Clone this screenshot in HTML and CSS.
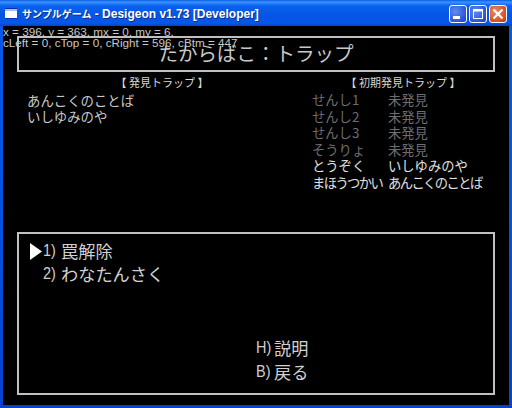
FILE: index.html
```html
<!DOCTYPE html>
<html lang="ja">
<head>
<meta charset="utf-8">
<title>サンプルゲーム</title>
<link rel="stylesheet" href="styles.css">
</head>
<body>
<div class="window">
  <div class="titlebar">
    <svg class="appicon" width="12" height="11" viewBox="0 0 12 11"><rect width="12" height="11" fill="#0a2fb0"/><rect x="0" y="1" width="12" height="9" fill="#fff"/><rect x="0" y="1" width="12" height="2" fill="#a8c0ee"/></svg>
    <span class="titletext"><span class="titlejp">サンプルゲーム</span> - Desigeon v1.73 [Developer]</span>
    <div class="buttons">
      <div class="wbtn blue"><svg width="16" height="16" viewBox="0 0 16 16"><rect x="3" y="10" width="7" height="3" fill="#fff"/></svg></div>
      <div class="wbtn blue"><svg width="16" height="16" viewBox="0 0 16 16"><rect x="3.5" y="3.5" width="9" height="9" fill="none" stroke="#fff"/><rect x="3" y="3" width="10" height="2.5" fill="#fff"/></svg></div>
      <div class="wbtn red"><svg width="16" height="16" viewBox="0 0 16 16"><path d="M3.5 3.5l9 9M12.5 3.5l-9 9" stroke="#fff" stroke-width="2.2" fill="none"/></svg></div>
    </div>
  </div>
  <div class="client">
    <div class="debug">x = 396, y = 363, mx = 0, my = 6,<br>cLeft = 0, cTop = 0, cRight = 596, cBtm = 447</div>
    <div class="framebox heading">たからばこ：トラップ</div>
    <div class="lists">
      <section class="found">
        <h2 class="listhead">【 発見トラップ 】</h2>
        <div class="rows">
          <div>あんこくのことば</div>
          <div>いしゆみのや</div>
        </div>
      </section>
      <section class="initial">
        <h2 class="listhead">【 初期発見トラップ 】</h2>
        <div class="table">
          <span class="dim">せんし1</span><span class="dim">未発見</span>
          <span class="dim">せんし2</span><span class="dim">未発見</span>
          <span class="dim">せんし3</span><span class="dim">未発見</span>
          <span class="dim">そうりょ</span><span class="dim">未発見</span>
          <span>とうぞく</span><span>いしゆみのや</span>
          <span class="tight">まほうつかい</span><span class="tight">あんこくのことば</span>
        </div>
      </section>
    </div>
    <div class="framebox menu">
      <div class="menuitem"><svg class="cursor" width="12" height="17" viewBox="0 0 12 17"><path d="M0 0L12 8.5L0 17Z" fill="#fff"/></svg><span class="key">1)</span>罠解除</div>
      <div class="menuitem"><span class="key">2)</span>わなたんさく</div>
      <div class="bottommenu">
        <div class="menuitem"><span class="key">H)</span>説明</div>
        <div class="menuitem"><span class="key">B)</span>戻る</div>
      </div>
    </div>
  </div>
</div>
</body>
</html>
```
FILE: styles.css
```css
* { box-sizing: border-box; }
html, body { margin: 0; padding: 0; background: #000; }
.window {
  width: 512px; height: 408px; display: flex; flex-direction: column;
  background: linear-gradient(180deg, #0a58e8 0%, #0553e2 50%, #0443cf 100%);
  font-family: "Noto Sans CJK JP", "DejaVu Sans", sans-serif;
  overflow: hidden;
}
.titlebar {
  height: 26px; display: flex; align-items: center; padding: 1px 5px 0 5px; flex: none;
  background: linear-gradient(180deg, #0a5be0 0%, #3a93ff 8%, #0a62ee 22%, #0554e4 60%, #0658ea 88%, #0444c8 100%);
}
.appicon { flex: none; margin-right: 5px; }
.titletext {
  color: #fff; font: bold 12px "Liberation Sans", "Noto Sans CJK JP", sans-serif; white-space: nowrap;
  text-shadow: 1px 1px 0 #0a2f90; flex: 1;
}
.titlejp { font-family: "Noto Sans CJK JP", sans-serif; font-size: 10px; }
.buttons { display: flex; gap: 2px; }
.wbtn { width: 18px; height: 18px; border: 1px solid #fff; border-radius: 3px; overflow: hidden; }
.wbtn svg { display: block; }
.blue { background: radial-gradient(circle at 35% 35%, #5f8cf0, #2a50d8 75%, #2040b8); }
.red { background: radial-gradient(circle at 35% 35%, #e88a6a, #d64a22 75%, #b03010); }
.client {
  position: relative; flex: 1; margin: 0 3px 3px 3px; background: #000; color: #c8c8c8;
  padding: 10px 14px 10px 14px; display: flex; flex-direction: column;
}
.debug {
  position: absolute; left: 0; top: 0; z-index: 2;
  font: 11.7px/11px "Liberation Sans", sans-serif; color: #c8c8c8; white-space: nowrap;
}
.framebox { border: 2px solid #c0c0c0; }
.heading { height: 36px; text-align: center; font-size: 19.5px; line-height: 30px; color: #c8c8c8; flex: none; }
.lists { height: 160px; display: flex; flex: none; }
.listhead { margin: 0; font-size: 11px; font-weight: normal; line-height: 18px; padding-top: 1px; text-align: center; color: #d8d8d8; }
.found { width: 284px; }
.found .listhead { padding-left: 6px; }
.rows { font-size: 13.4px; line-height: 16px; padding-left: 10px; margin-top: 1px; color: #c8c8c8; }
.initial { flex: 1; }
.initial .listhead { padding-left: 10px; }
.table {
  display: grid; grid-template-columns: 76px 1fr; font-size: 13.3px; line-height: 16.6px; margin-top: 1px; padding-left: 11px; color: #e0e0e0; white-space: nowrap;
}
.dim { color: #6e6e6e; }
.tight { letter-spacing: -1.6px; }
.menu { flex: 1; position: relative; padding: 5px 0 0 24px; font-size: 17.2px; line-height: 23px; }
.menuitem { position: relative; color: #d0d0d0; display: flex; }
.key { width: 18px; font-family: "Liberation Sans", sans-serif; font-size: 17px; transform: scaleX(0.85); transform-origin: left center; white-space: nowrap; }
.cursor { position: absolute; left: -13px; top: 4px; }
.bottommenu { position: absolute; left: 237px; bottom: 9px; line-height: 24px; }
```
